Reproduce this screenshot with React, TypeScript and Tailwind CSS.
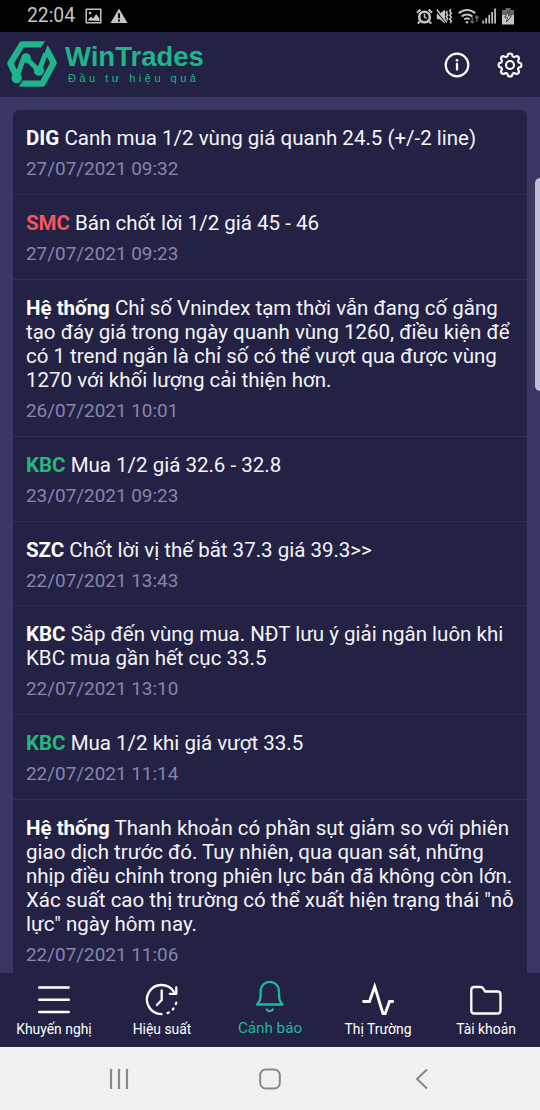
import type { ReactNode } from 'react';

type Alert = {
  code: string;
  text: string;
  time: string;
  color?: string;
};

const alerts: Alert[] = [
  { code: 'DIG', text: 'Canh mua 1/2 vùng giá quanh 24.5 (+/-2 line)', time: '27/07/2021 09:32' },
  { code: 'SMC', text: 'Bán chốt lời 1/2 giá 45 - 46', time: '27/07/2021 09:23', color: 'text-[#f2575c]' },
  {
    code: 'Hệ thống',
    text: 'Chỉ số Vnindex tạm thời vẫn đang cố gắng tạo đáy giá trong ngày quanh vùng 1260, điều kiện để có 1 trend ngắn là chỉ số có thể vượt qua được vùng 1270 với khối lượng cải thiện hơn.',
    time: '26/07/2021 10:01',
  },
  { code: 'KBC', text: 'Mua 1/2 giá 32.6 - 32.8', time: '23/07/2021 09:23', color: 'text-[#26b77c]' },
  { code: 'SZC', text: 'Chốt lời vị thế bắt 37.3 giá 39.3>>', time: '22/07/2021 13:43' },
  { code: 'KBC', text: 'Sắp đến vùng mua. NĐT lưu ý giải ngân luôn khi KBC mua gần hết cục 33.5', time: '22/07/2021 13:10' },
  { code: 'KBC', text: 'Mua 1/2 khi giá vượt 33.5', time: '22/07/2021 11:14', color: 'text-[#26b77c]' },
  {
    code: 'Hệ thống',
    text: 'Thanh khoản có phần sụt giảm so với phiên giao dịch trước đó. Tuy nhiên, qua quan sát, những nhịp điều chỉnh trong phiên lực bán đã không còn lớn. Xác suất cao thị trường có thể xuất hiện trạng thái "nỗ lực" ngày hôm nay.',
    time: '22/07/2021 11:06',
  },
];

function StatusBar() {
  return (
    <div className="flex h-8 shrink-0 items-center bg-black pl-[27px] pr-[26px] text-[#c4c4c4]">
      <span className="text-[19.3px] leading-8">22:04</span>
      <svg className="ml-[10px]" width="17" height="16" viewBox="0 0 17 16">
        <path fillRule="evenodd" fill="currentColor" d="M1 .5h15q.5 0 .5.5v14q0 .5-.5.5H1q-.5 0-.5-.5V1Q.5.5 1 .5zM2 2v12h13V2z" />
        <path fill="currentColor" d="M2.500 12.500 6 8.500l2 2 3.200-4.500 3.300 4.500v2.500z" />
        <circle cx="5" cy="5" r="1.3" fill="currentColor" />
      </svg>
      <svg className="ml-2" width="18" height="16" viewBox="0 0 18 16">
        <path fill="currentColor" d="M9 .5 17.5 15H.5z" />
        <path stroke="#000" strokeWidth="1.9" d="M9 5.300v4.900M9 11.400v2" />
      </svg>

      <div className="ml-auto flex items-center">
        {/* alarm */}
        <svg width="17" height="17" viewBox="0 0 17 17" fill="none" stroke="currentColor">
          <circle cx="8.5" cy="9" r="5.3" strokeWidth="2.6" />
          <path strokeWidth="1.5" d="M8.500 5.800V9l2 1.400" />
          <path strokeWidth="2" d="M1 4.700 4.400 1.500M16 4.700l-3.400-3.200M3.800 13.500l-2 2.200M13.200 13.500l2 2.200" />
        </svg>
        {/* muted + vibrate */}
        <svg className="ml-[3px]" width="17" height="17" viewBox="0 0 17 17">
          <path fill="currentColor" d="M.8 5.800h3L9 1.500v14l-5.200-4.300h-3z" />
          <path stroke="#000" strokeWidth="1.4" d="m0 2.600 11 13" />
          <path stroke="currentColor" strokeWidth="1.6" d="m.8 1.600 10 12.600" />
          <path fill="none" stroke="currentColor" strokeWidth="1.6" d="m11.300 3-1 1.800 1.300 2-1.300 2 1.300 2-.6 1.400M14.800 1.200l-1 2 1.500 2-1.500 2 1.500 2-1.500 2 1.500 2-1 2" />
        </svg>
        {/* wifi */}
        <svg className="ml-[5px]" width="22" height="17" viewBox="0 0 22 17" fill="none" stroke="currentColor">
          <path strokeWidth="2" d="M.8 5.300a12 12 0 0 1 16.400 0M3.600 8.500a8 8 0 0 1 10.800 0M6.300 11.500a4 4 0 0 1 5.400 0" />
          <circle cx="9" cy="14.2" r="1.2" fill="currentColor" stroke="none" />
          <path stroke="#636363" strokeWidth="1.4" d="M14.200 9v6M12.400 13l1.800 2 1.800-2M18.800 14V8M17 10l1.800-2 1.800 2" />
        </svg>
        {/* signal */}
        <svg className="ml-[2px]" width="14" height="16" viewBox="0 0 14 16" stroke="currentColor" strokeWidth="1.7">
          <path d="M1.200 15.500v-3M4.200 15.500V10M7.200 15.500V7M10.200 15.500V4M13.100 15.500V.5" />
        </svg>
        {/* battery */}
        <svg className="ml-[6px]" width="12" height="17" viewBox="0 0 12 17">
          <path fill="#686868" d="M3.500 0h5v2H12v5H0V2h3.500z" />
          <path fill="currentColor" d="M0 7h12v9.500H0z" />
          <path fill="#dadada" stroke="#333" strokeWidth=".9" d="M7.400 3 2.600 9.200h2.900l-1 4.800 5-6.200H6.400z" />
        </svg>
      </div>
    </div>
  );
}

function Logo() {
  return (
    <svg width="52" height="48" viewBox="18 30 156 144" fill="none" stroke="#1fb58b">
      <path strokeWidth="19" strokeLinejoin="round" d="M118 43H66L31 100l19 40" />
      <path strokeWidth="19" strokeLinejoin="round" d="M146 70l15 28-34 63H70" />
      <path strokeWidth="15" strokeLinejoin="round" d="M50 143 68 92l9-9 40 39 20-52" />
      <path fill="#1fb58b" stroke="none" d="M117 33.500h18.500l-12.500 19h-6zM142.500 45l13 22-15 16-11-2zM71 151.500v19H57l11-19z" />
      <circle cx="50" cy="144" r="15.500" fill="#1fb58b" stroke="none" />
      <circle cx="78" cy="84" r="14.500" fill="#1fb58b" stroke="none" />
      <circle cx="117" cy="122" r="15.500" fill="#1fb58b" stroke="none" />
    </svg>
  );
}

function Header() {
  return (
    <header className="flex h-[65px] shrink-0 items-center bg-[#232244] pl-[6px] pr-[17px]">
      <div className="-mt-[2px]">
        <Logo />
      </div>
      <div className="ml-[7px] flex flex-col font-['Liberation_Sans',sans-serif] text-[#1fb58b]">
        <span className="text-[27.5px] font-bold leading-[26px]">WinTrades</span>
        <span className="mt-px pl-[3px] text-[11px] leading-[14px] tracking-[3.5px]">Đầu tư hiệu quả</span>
      </div>
      <div className="ml-auto flex items-center gap-[27px] text-white">
        <svg width="26" height="26" viewBox="0 0 26 26" fill="none" stroke="currentColor" strokeWidth="2.2">
          <circle cx="13" cy="13" r="11.3" />
          <path strokeWidth="2.3" strokeLinecap="round" d="M13 12v5.500" />
          <circle cx="13" cy="8.3" r="1.4" fill="currentColor" stroke="none" />
        </svg>
        <svg width="26" height="26" viewBox="0 0 26 26" fill="none" stroke="currentColor" strokeWidth="2.1" strokeLinejoin="round">
          <path d="M11 2.200Q13 .8 15 2.200l.6 2.200 1.600.7 2.200-1q2.500.2 2.600 2.600l-1 2.200.7 1.600 2.100.7q1.200 1.800 0 3.700l-2.100.7-.7 1.600 1 2.200q-.1 2.400-2.600 2.600l-2.200-1-1.600.7-.6 2.200q-2 1.300-4 0l-.6-2.200-1.600-.7-2.200 1q-2.500-.2-2.600-2.600l1-2.200-.7-1.600-2.100-.7q-1.200-1.900 0-3.700l2.100-.7.7-1.600-1-2.200q.1-2.400 2.600-2.600l2.200 1 1.600-.7z" />
          <circle cx="13" cy="13" r="4" />
        </svg>
      </div>
    </header>
  );
}

function AlertRow({ alert }: { alert: Alert }) {
  return (
    <li className="border-b border-[#2f2e54] pb-[12.9px] pl-[13px] pr-[11px] pt-[16px]">
      <p className="text-[20.5px] leading-6 text-[#f4f4f8]">
        <b className={alert.color || 'text-white'}>{alert.code}</b> {alert.text}
      </p>
      <p className="mt-[7px] text-[18.9px] leading-6 text-[#8785ad]">{alert.time}</p>
    </li>
  );
}

function Tab({ label, active, children }: { label: string; active?: boolean; children: ReactNode }) {
  return (
    <div className={`flex flex-1 flex-col items-center ${active ? 'pt-[6px] text-[#1fb99a]' : 'pt-[8px] text-white'}`}>
      <svg width="36" height="36" viewBox="0 0 36 36" fill="none" stroke="currentColor" strokeWidth="2.3" strokeLinecap="round" strokeLinejoin="round">
        {children}
      </svg>
      <span className={`whitespace-nowrap leading-[18px] ${active ? 'mt-[4px] text-[15.2px]' : 'mt-[3px] text-[13.9px]'}`}>{label}</span>
    </div>
  );
}

function TabBar() {
  return (
    <nav className="flex h-[74px] shrink-0 bg-[#232244]">
      <Tab label="Khuyến nghị">
        <path strokeWidth="2.5" d="M3.200 6.500h29.500M3.200 18.700h29.500M3.200 31h29.500" />
      </Tab>
      <Tab label="Hiệu suất">
        <path d="M17.500 33.200A14.600 14.600 0 1 1 30 11" />
        <path d="M32.300 6.500v6.300h-6.500" />
        <path d="M17.700 9.500V19l-4.800 5" />
        <path strokeDasharray="1.3 5" d="M23.600 32A14.600 14.600 0 0 0 32.600 18" />
      </Tab>
      <Tab label="Cảnh báo" active>
        <path d="M5 25.500Q8.600 22 8.600 16.500V12a9.200 9.200 0 0 1 18.400 0v4.500q0 5.500 3.600 9z" />
        <path d="M14.800 30.500q1 1.700 3 1.700t3-1.700" />
      </Tab>
      <Tab label="Thị Trường">
        <path strokeWidth="2.8" strokeLinejoin="miter" d="M3.500 20.500h6L14.700 5.500 23 32.500h2.200L29.500 20.500h3.200" />
      </Tab>
      <Tab label="Tài khoản">
        <path d="M3.300 9q0-3 3-3h6.500q1.500 0 2.300 1.300l2.100 3.200h12.300q3 0 3 3v16q0 3-3 3H6.300q-3 0-3-3z" />
      </Tab>
    </nav>
  );
}

function SystemNav() {
  return (
    <div className="grid h-[63px] shrink-0 grid-cols-3 items-center bg-[#f1f1f1] px-[43px] text-[#888]">
      <svg className="mx-auto" width="22" height="22" viewBox="0 0 22 22" stroke="currentColor" strokeWidth="2.2">
        <path d="M3 1v20M11 1v20M19 1v20" />
      </svg>
      <svg className="mx-auto" width="22" height="22" viewBox="0 0 22 22" fill="none" stroke="currentColor" strokeWidth="2">
        <rect x="1.2" y="1.5" width="19.6" height="19" rx="5.5" />
      </svg>
      <svg className="mx-auto" width="22" height="22" viewBox="0 0 22 22" fill="none" stroke="currentColor" strokeWidth="2">
        <path d="M17 1.500 7 11l10 9.500" />
      </svg>
    </div>
  );
}

export default function App() {
  return (
    <div className="flex h-[1110px] w-[540px] flex-col overflow-hidden bg-[#393865] font-[Roboto,'Noto_Sans',sans-serif]">
      <StatusBar />
      <Header />
      <main className="relative min-h-0 flex-1 overflow-hidden px-[13px] pt-[13px]">
        <ul className="overflow-hidden rounded-t-[6px] bg-[#232244]">
          {alerts.map((alert) => (
            <AlertRow key={alert.time} alert={alert} />
          ))}
        </ul>
        {/* edge panel handle */}
        <div className="absolute right-0 top-[81px] h-[213px] w-[5px] rounded-l-[5px] bg-[#bfc0d2]" />
      </main>
      <TabBar />
      <SystemNav />
    </div>
  );
}
